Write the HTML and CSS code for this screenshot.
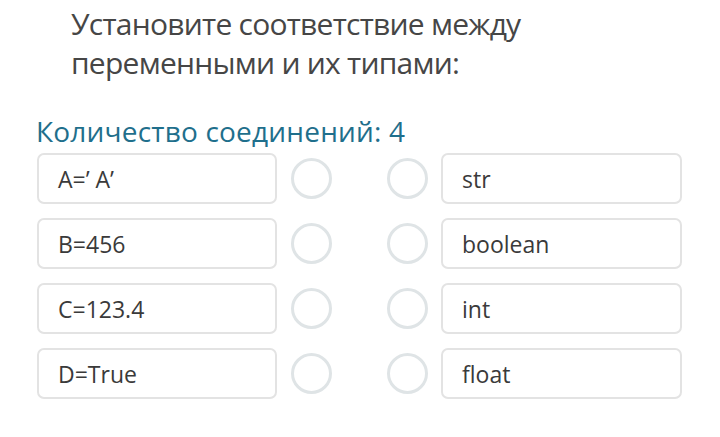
FILE: index.html
```html
<!DOCTYPE html>
<html lang="ru">
<head>
<meta charset="utf-8">
<link rel="stylesheet" href="styles.css">
</head>
<body>
<div class="page">
  <h1 class="title">Установите соответствие между<br>переменными и их типами:</h1>
  <div class="count">Количество соединений: 4</div>
  <div class="rows">
    <div class="row"><div class="box">A=’ A’</div><span class="dot dot-l"></span><span class="dot dot-r"></span><div class="box box-r">str</div></div>
    <div class="row"><div class="box">B=456</div><span class="dot dot-l"></span><span class="dot dot-r"></span><div class="box box-r">boolean</div></div>
    <div class="row"><div class="box">C=123.4</div><span class="dot dot-l"></span><span class="dot dot-r"></span><div class="box box-r">int</div></div>
    <div class="row"><div class="box">D=True</div><span class="dot dot-l"></span><span class="dot dot-r"></span><div class="box box-r">float</div></div>
  </div>
</div>
</body>
</html>
```
FILE: styles.css
```css
html, body {
  margin: 0;
  padding: 0;
  background: #ffffff;
}
body {
  font-family: "Open Sans", "Noto Sans", sans-serif;
  color: #3d3d3d;
  width: 720px;
  height: 437px;
  overflow: hidden;
}
.page {
  padding: 4px 0 0 37px;
}
.title {
  margin: 0 0 0 34px;
  font-weight: 400;
  font-size: 30px;
  line-height: 39px;
  color: #464646;
  letter-spacing: -0.75px;
}
.count {
  margin-top: 31px;
  font-size: 28px;
  line-height: 36px;
  color: #1f6f8c;
  margin-left: -1px;
  letter-spacing: 0.2px;
}
.rows {
  margin-top: 4px;
  display: flex;
  flex-direction: column;
  gap: 14px;
}
.row {
  display: flex;
  align-items: center;
  height: 51px;
}
.box {
  box-sizing: border-box;
  width: 240px;
  height: 51px;
  border: 2px solid #e3e3e3;
  border-radius: 7px;
  padding-left: 19px;
  display: flex;
  align-items: center;
  font-size: 23px;
  color: #3a3a3a;
}
.box-r {
  width: 241px;
}
.dot {
  box-sizing: border-box;
  width: 41px;
  height: 41px;
  border: 3px solid #dfe4e6;
  border-radius: 50%;
}
.dot-l {
  margin-left: 14px;
}
.dot-r {
  margin-left: 55px;
  margin-right: 13px;
}
```
